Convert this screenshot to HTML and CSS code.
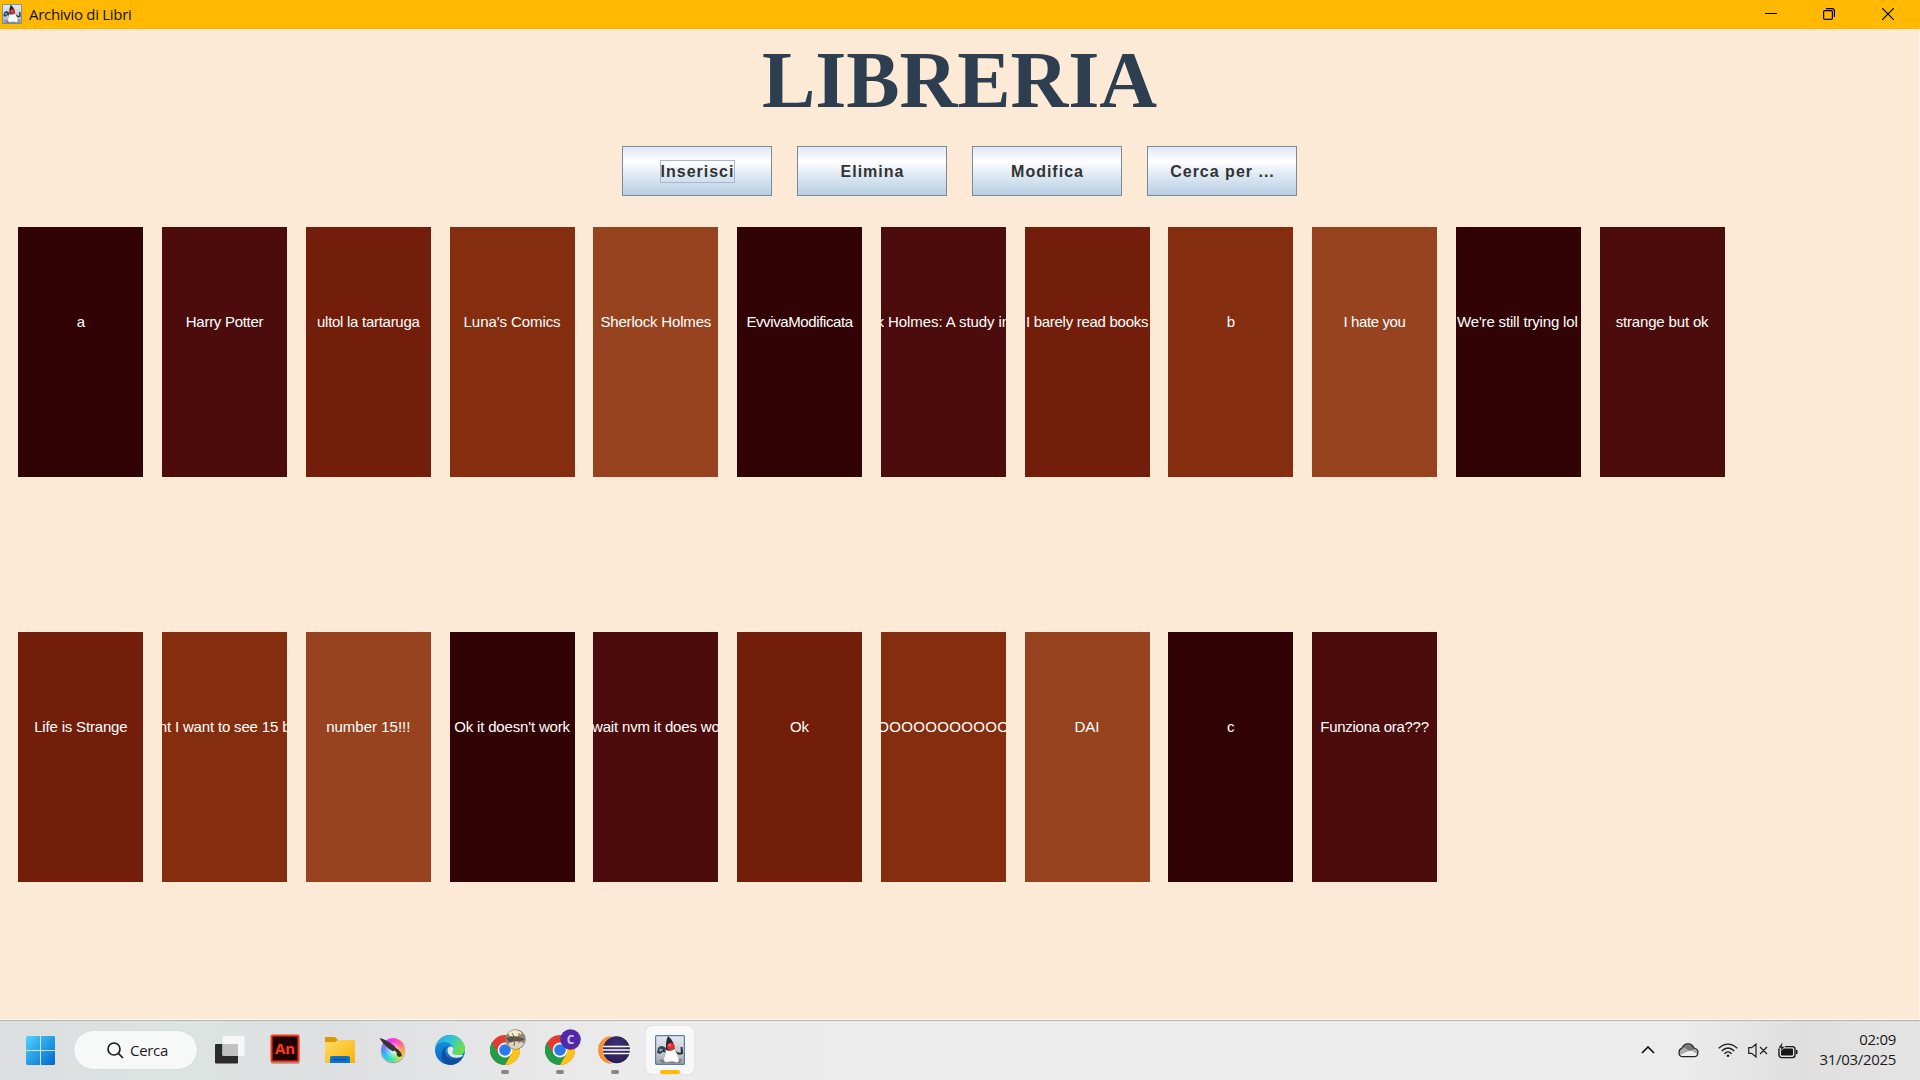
FILE: index.html
```html
<!DOCTYPE html>
<html lang="it">
<head>
<meta charset="utf-8">
<title>Archivio di Libri</title>
<link rel="stylesheet" href="styles.css">
</head>
<body>
<svg class="defs" width="0" height="0" aria-hidden="true">
  <defs>
    <linearGradient id="win" x1="0" y1="0" x2="1" y2="1"><stop offset="0" stop-color="#4fd3ff"/><stop offset="1" stop-color="#0067cf"/></linearGradient>
    <linearGradient id="fold" x1="0" y1="0" x2="1" y2="1"><stop offset="0" stop-color="#ffdd6b"/><stop offset="1" stop-color="#f8b200"/></linearGradient>
    <linearGradient id="edgeTop" x1="0" y1="0" x2="1" y2=".4"><stop offset="0" stop-color="#1fa5e6"/><stop offset=".5" stop-color="#2fc3d9"/><stop offset="1" stop-color="#6be04e"/></linearGradient>
    <linearGradient id="edgeBody" x1="0" y1="0" x2="0" y2="1"><stop offset="0" stop-color="#1799e2"/><stop offset="1" stop-color="#0a63c0"/></linearGradient>
    <linearGradient id="dukeBg" x1="0" y1="0" x2="0" y2="1"><stop offset="0" stop-color="#e4e8f0"/><stop offset=".6" stop-color="#c6cbd5"/><stop offset="1" stop-color="#979da8"/></linearGradient>
    <radialGradient id="eclipse" cx=".5" cy=".4" r=".6"><stop offset="0" stop-color="#43357e"/><stop offset="1" stop-color="#271d4f"/></radialGradient>
    <symbol id="duke" viewBox="0 0 30 30">
      <rect x=".6" y=".6" width="28.800" height="28.800" rx="1" fill="url(#dukeBg)" stroke="#5b7d9e" stroke-width="1.200"/>
      <path d="M4 25Q15 22 27 24L25 28H7Z" fill="#666c74" opacity=".7"/>
      <path d="M11 13Q6 9 3 13L2 18L5 19L8 17L11 18Z" fill="#34414d"/>
      <path d="M4 14Q7 13 8 15L5 17Z" fill="#68b2df"/>
      <path d="M20 16Q23 20 27 18L26.500 12" fill="none" stroke="#2a2e33" stroke-width="2"/>
      <path d="M11 13Q11 19 8.500 24Q9 28 13 27Q17 26 22 27.500Q26 27 22 19L19.500 13Z" fill="#fafaf9" stroke="#a5a7a9" stroke-width=".5"/>
      <path d="M13 1Q10.500 6 11 15Q15 17 19.800 14Q19 6 13 1Z" fill="#24292c"/>
      <circle cx="15.800" cy="11.500" r="3.700" fill="#e22a2f"/><circle cx="14.800" cy="10.200" r="1.200" fill="#ff7770"/>
    </symbol>
    <symbol id="chrome" viewBox="0 0 30 30">
      <circle cx="15" cy="15" r="15" fill="#e33b2e"/>
      <path d="M2 7.500A15 15 0 0 0 15 30L21.500 18.800L15 15L8.500 18.700Z" fill="#229c47"/>
      <path d="M15 30A15 15 0 0 0 28 7.500H15L21.500 18.800Z" fill="#fcc31a"/>
      <circle cx="15" cy="15" r="7.400" fill="#fff"/><circle cx="15" cy="15" r="5.800" fill="#2b78ea"/>
    </symbol>
  </defs>
</svg>

<header class="titlebar">
  <svg class="titlebar-icon" width="20" height="20"><use href="#duke" width="20" height="20"/></svg>
  <span class="titlebar-text">Archivio di Libri</span>
  <div class="window-controls">
    <svg width="12" height="12"><path d="M0 5.500H12" stroke="#000"/></svg>
    <svg width="12" height="12" fill="none" stroke="#000" stroke-width="1.200"><rect x=".6" y="2.600" width="8.800" height="8.800" rx="1.200"/><path d="M3 .6H9Q11.400 .6 11.400 3V9"/></svg>
    <svg width="12" height="12"><path d="M0 0L12 12M12 0L0 12" stroke="#000" stroke-width="1.200"/></svg>
  </div>
</header>

<main class="library">
  <h1 class="title">LIBRERIA</h1>
  <nav class="actions">
    <button class="action"><span class="label focus">Inserisci</span></button>
    <button class="action"><span class="label">Elimina</span></button>
    <button class="action"><span class="label">Modifica</span></button>
    <button class="action"><span class="label">Cerca per ...</span></button>
  </nav>
  <section class="shelf">
    <div class="book c1"><span>a</span></div>
    <div class="book c2"><span class="t3">Harry Potter</span></div>
    <div class="book c3"><span class="t3">ultol la tartaruga</span></div>
    <div class="book c4"><span class="t1">Luna's Comics</span></div>
    <div class="book c5"><span class="t2">Sherlock Holmes</span></div>
    <div class="book c1"><span class="t4">EvvivaModificata</span></div>
    <div class="book c2"><span class="t1">k Holmes: A study in</span></div>
    <div class="book c3"><span class="t3">I barely read books</span></div>
    <div class="book c4"><span>b</span></div>
    <div class="book c5"><span class="t4">I hate you</span></div>
    <div class="book c1"><span class="t2 early">We're still trying lol</span></div>
    <div class="book c2"><span class="t2">strange but ok</span></div>
  </section>
  <section class="shelf">
    <div class="book c3"><span class="t2">Life is Strange</span></div>
    <div class="book c4"><span class="t2">nt I want to see 15 b</span></div>
    <div class="book c5"><span>number 15!!!</span></div>
    <div class="book c1"><span class="t2">Ok it doesn't work</span></div>
    <div class="book c2"><span class="t2">wait nvm it does wo</span></div>
    <div class="book c3"><span>Ok</span></div>
    <div class="book c4"><span class="wide">OOOOOOOOOOO</span></div>
    <div class="book c5"><span>DAI</span></div>
    <div class="book c1"><span>c</span></div>
    <div class="book c2"><span class="t3">Funziona ora???</span></div>
  </section>
</main>

<footer class="taskbar">
  <svg class="start" width="29" height="29" fill="url(#win)"><path d="M1 0H14V14H0V1ZM15 0H28L29 1V14H15ZM0 15H14V29H1L0 28ZM15 15H29V28L28 29H15Z"/></svg>
  <div class="search">
    <svg width="17" height="17" fill="none" stroke="#1d1d1d" stroke-width="1.700"><circle cx="7" cy="7" r="6"/><path d="M11.300 11.300L16 16"/></svg>
    <span>Cerca</span>
  </div>
  <div class="apps">
    <svg class="app" viewBox="0 0 48 48"><rect x="9" y="18" width="23" height="19.500" rx="1" fill="#2b2b2b"/><rect x="16.500" y="10" width="22" height="20" rx="1" fill="#f7f7f7"/><path d="M16.500 18H32V30H17.500L16.500 29Z" fill="#c1c1c1"/></svg>
    <svg class="app" viewBox="0 0 48 48"><rect x="10" y="10" width="28.500" height="28" rx="1" fill="#777" opacity=".5"/><rect x="10.500" y="9.500" width="27" height="26" rx="1" fill="#220000" stroke="#f9391f" stroke-width="2"/><text class="an" x="24" y="28">An</text></svg>
    <svg class="app" viewBox="0 0 48 48"><path d="M9 12Q9 11 10 11H19L22 14H38Q39 14 39 15V20H9Z" fill="#dc9800"/><path d="M9 16H19L22 14H38Q39 14 39 15V37H9Z" fill="url(#fold)"/><path d="M14 37V32Q14 30 16 30H32Q34 30 34 32V37Z" fill="#0c73cc"/><path d="M17.500 33.500H30.500" stroke="#07478e" stroke-width="1.200"/></svg>
    <div class="app krita"><i class="wheel"></i><svg viewBox="0 0 48 48"><path d="M8.500 12Q15 13 24 20.500L25 23L22 25.500Q13 20 8.500 12Z" fill="#343434"/><path d="M23 24L25 22Q30 25 31 29.500Q29 32 26.500 30Q25 29 26 27Z" fill="#333"/></svg></div>
    <svg class="app" viewBox="0 0 48 48"><circle cx="24" cy="24" r="15" fill="url(#edgeBody)"/><path d="M9.300 22A15 15 0 0 1 39 23Q39 29 31 29Q26 29 26 27Q28 25 27.500 22Q25 16 18 16Q12 16 9.300 22Z" fill="url(#edgeTop)"/><path d="M23 20Q18 22 19 27Q21 33 28 33Q34 33 37 30.500Q33 39 24 39Q15 38 15.500 29Q16 21 23 20Z" fill="#114e9d"/><path d="M21.500 24Q21.500 20.500 25 20.500Q28 21.500 27.500 24Q26 26.500 26.500 27.500Q28 30 36.500 28.500L37 30Q32 33 26 31Q21 28 21.500 24Z" fill="#e6e8e8"/></svg>
    <div class="app running"><svg viewBox="0 0 48 48"><use href="#chrome" x="9" y="9" width="30" height="30"/><circle cx="34.500" cy="13.500" r="10.200" fill="#8f8774"/><path d="M27 7Q34 1 41 7L38 10L29 10Z" fill="#f5edcf"/><path d="M25 12Q33 9 44 13L40 15L28 16Z" fill="#5b5343"/><path d="M27 18Q34 13 43 17Q41 22 35 23Q29 23 27 18Z" fill="#dcd4bc"/><path d="M31 7L34 12L33 20M38 7L38 17" stroke="#706650" fill="none"/></svg></div>
    <div class="app running"><svg viewBox="0 0 48 48"><use href="#chrome" x="9" y="9" width="30" height="30"/><circle cx="34.500" cy="13.500" r="10.300" fill="#4f29a8"/><text class="profile" x="34.500" y="17.800">C</text></svg></div>
    <div class="app running"><svg viewBox="0 0 48 48"><path d="M21 10A14 14 0 0 0 21 38Q14 34 13 24Q14 14 21 10Z" fill="#f79336"/><circle cx="25.500" cy="23.700" r="13.500" fill="url(#eclipse)"/><path d="M12 20.500H39M11.500 24H39.500M12 27.500H39" stroke="#fff" stroke-width="1.500"/></svg></div>
    <div class="app running active"><svg viewBox="0 0 48 48"><use href="#duke" x="9" y="9" width="30" height="30"/></svg></div>
  </div>
  <div class="tray">
    <svg class="chevron" width="14" height="8" fill="none" stroke="#151515" stroke-width="1.700"><path d="M1 7L7 1L13 7"/></svg>
    <svg class="cloud" width="21" height="15"><path d="M4 5Q6 .7 10 .8Q14 .6 16 5Q20 6 20 9Q20 13.700 16 13.700H5Q1 13.700 1 9.500Q1 6 4 5Z" fill="#aaa"/><path d="M1.500 12L13 7L19 11Q18 13.700 15 13.700H4Z" fill="#eee"/><path d="M5 4Q9 .5 14 3L17 6L12 8Z" fill="#777"/><path d="M4 5Q6 .7 10 .8Q14 .6 16 5Q20 6 20 9Q20 13.700 16 13.700H5Q1 13.700 1 9.500Q1 6 4 5Z" fill="none" stroke="#222" stroke-width="1.200"/></svg>
    <svg class="wifi" width="20" height="15" fill="none" stroke="#1b1b1b" stroke-width="1.300"><path d="M.7 5.300Q10-3 19.300 5.300M3.700 8Q10 2 16.300 8M6.400 10.700Q10 7 13.600 10.700"/><circle cx="10" cy="12.800" r="1.300" fill="#1b1b1b" stroke="none"/></svg>
    <svg class="speaker" width="20" height="15" fill="none" stroke="#222" stroke-width="1.200"><path d="M.7 4.700H3.700L8 1V14L3.700 10.300H.7ZM12 4L19 11M19 4L12 11"/></svg>
    <svg class="battery" width="20" height="17"><rect x="1" y="4.600" width="16" height="11" rx="2.500" fill="none" stroke="#171717" stroke-width="1.400"/><rect x="3" y="6.600" width="12" height="7" rx="1" fill="#171717"/><path d="M18 8H19.500V12H18Z" fill="#171717"/><path d="M4.500 0L0 6H3L2 10L7 4.500H4L5 0Z" fill="#171717" stroke="#e9e9e9" stroke-width=".7"/></svg>
    <div class="clock"><span>02:09</span><span>31/03/2025</span></div>
  </div>
</footer>
</body>
</html>
```

FILE: styles.css
```css
* { box-sizing: border-box; }
body {
  margin: 0;
  width: 1920px;
  height: 1080px;
  overflow: hidden;
  display: flex;
  flex-direction: column;
  background: #fdead6;
  font-family: "Open Sans", "Noto Sans", sans-serif;
}
svg { display: block; flex: none; }
.defs { position: absolute; }

.titlebar {
  height: 29px;
  flex: none;
  display: flex;
  align-items: center;
  padding: 0 26px 1px 2px;
  background: #ffb900;
}
.titlebar-text {
  margin-left: 7px;
  font-size: 15px;
  line-height: 20px;
  letter-spacing: -.300px;
  color: #111;
}
.window-controls {
  display: flex;
  gap: 46px;
  margin-left: auto;
}
.window-controls svg:last-child { margin-left: 1px; }

.library {
  flex: 1;
  min-height: 0;
  border-right: 1px solid #fff5ea;
  border-bottom: 1px solid #fffaf4;
}
.title {
  margin: 0;
  height: 117px;
  padding-top: 5px;
  text-align: center;
  font: bold 80px/92px "Liberation Serif", serif;
  letter-spacing: -.100px;
  color: #2c3e50;
}
.actions {
  display: flex;
  justify-content: center;
  gap: 25px;
  height: 81px;
}
.action {
  display: flex;
  justify-content: center;
  width: 150px;
  height: 50px;
  padding: 13px 0 0 1px;
  border: 1px solid #7a8a99;
  border-radius: 0;
  background: linear-gradient(#dde8f3, #fff 30%, #dde8f3 60%, #b8cfe5);
  font: bold 16px/21px "Liberation Sans", sans-serif;
  letter-spacing: 1px;
  color: #333;
}
.label {
  height: 23px;
  border: 1px solid transparent;
}
.focus { border-color: #a3b8cc; }

.shelf {
  display: flex;
  gap: 18.750px;
  height: 405px;
  padding-left: 18.300px;
}
.book {
  display: flex;
  justify-content: center;
  width: 125px;
  height: 250px;
  flex: none;
  padding-top: 86px;
  overflow: hidden;
  font: 15px/17px "Liberation Sans", sans-serif;
  color: #fff;
  white-space: nowrap;
}
.book span { flex: none; }
.wide { letter-spacing: .330px; }
.t1 { letter-spacing: -.080px; }
.t2 { letter-spacing: -.170px; }
.t3 { letter-spacing: -.280px; }
.t4 { letter-spacing: -.390px; }
.early { margin-right: 2px; }
.c1 { background: #320304; }
.c2 { background: #4c0c0b; }
.c3 { background: #721e0b; }
.c4 { background: #852e0f; }
.c5 { background: #97431f; }

.taskbar {
  height: 60px;
  flex: none;
  display: flex;
  align-items: center;
  padding: 0 0 1px 26px;
  border-top: 1px solid #b4b7b9;
  background: linear-gradient(90deg, #dcdee0 0, #dce4e1 170px, #dedfe1 330px, #ebebeb 620px, #ececec 1680px, #dfdfdf 1800px, #e4e4e4 1920px);
  color: #1b1b1b;
}
.search {
  display: flex;
  align-items: center;
  gap: 6px;
  width: 123px;
  height: 38px;
  margin-left: 19px;
  padding-left: 33px;
  border-radius: 19px;
  background: #f7f9f9;
  box-shadow: 0 0 1px #b9bdbd;
  font-size: 15px;
  letter-spacing: -.300px;
}
.search span { padding-bottom: 1px; }
.apps {
  display: flex;
  gap: 7px;
  margin-left: 9px;
}
.app {
  position: relative;
  width: 48px;
  height: 48px;
  overflow: visible;
}
.an {
  font: bold 15px "Open Sans", sans-serif;
  text-anchor: middle;
  fill: #ff3b20;
}
.profile {
  font: bold 12px "Open Sans", sans-serif;
  text-anchor: middle;
  fill: #d3c5f5;
}
.krita svg { position: relative; }
.wheel {
  position: absolute;
  left: 10px;
  top: 12px;
  width: 24px;
  height: 24px;
  border-radius: 50%;
  background: radial-gradient(#fff 0, #fff6 25%, transparent 50%), conic-gradient(#ff35e9, #ff5e9e, #ffa252, #dae23b, #49e7a0, #25cbed, #5791f5, #b55af5, #ff35e9);
  box-shadow: 0 1px 1px #888;
}
.running::after {
  content: "";
  position: absolute;
  left: 20px;
  bottom: 0;
  width: 8px;
  height: 4px;
  border-radius: 2px;
  background: #858585;
}
.active {
  border-radius: 5px;
  background: #f8f8f8;
  box-shadow: 0 0 1px #aaa;
}
.active::after {
  left: 14px;
  width: 20px;
  background: #ffb900;
}
.tray {
  display: flex;
  align-items: center;
  margin-left: auto;
  padding-right: 24px;
}
.cloud { margin-left: 23px; }
.wifi { margin-left: 19px; }
.speaker { margin-left: 10px; }
.battery { margin-left: 10px; }
.clock {
  display: flex;
  flex-direction: column;
  align-items: flex-end;
  width: 98px;
  padding-bottom: 2px;
  font-size: 15px;
  line-height: 20px;
  letter-spacing: -.300px;
}
```
